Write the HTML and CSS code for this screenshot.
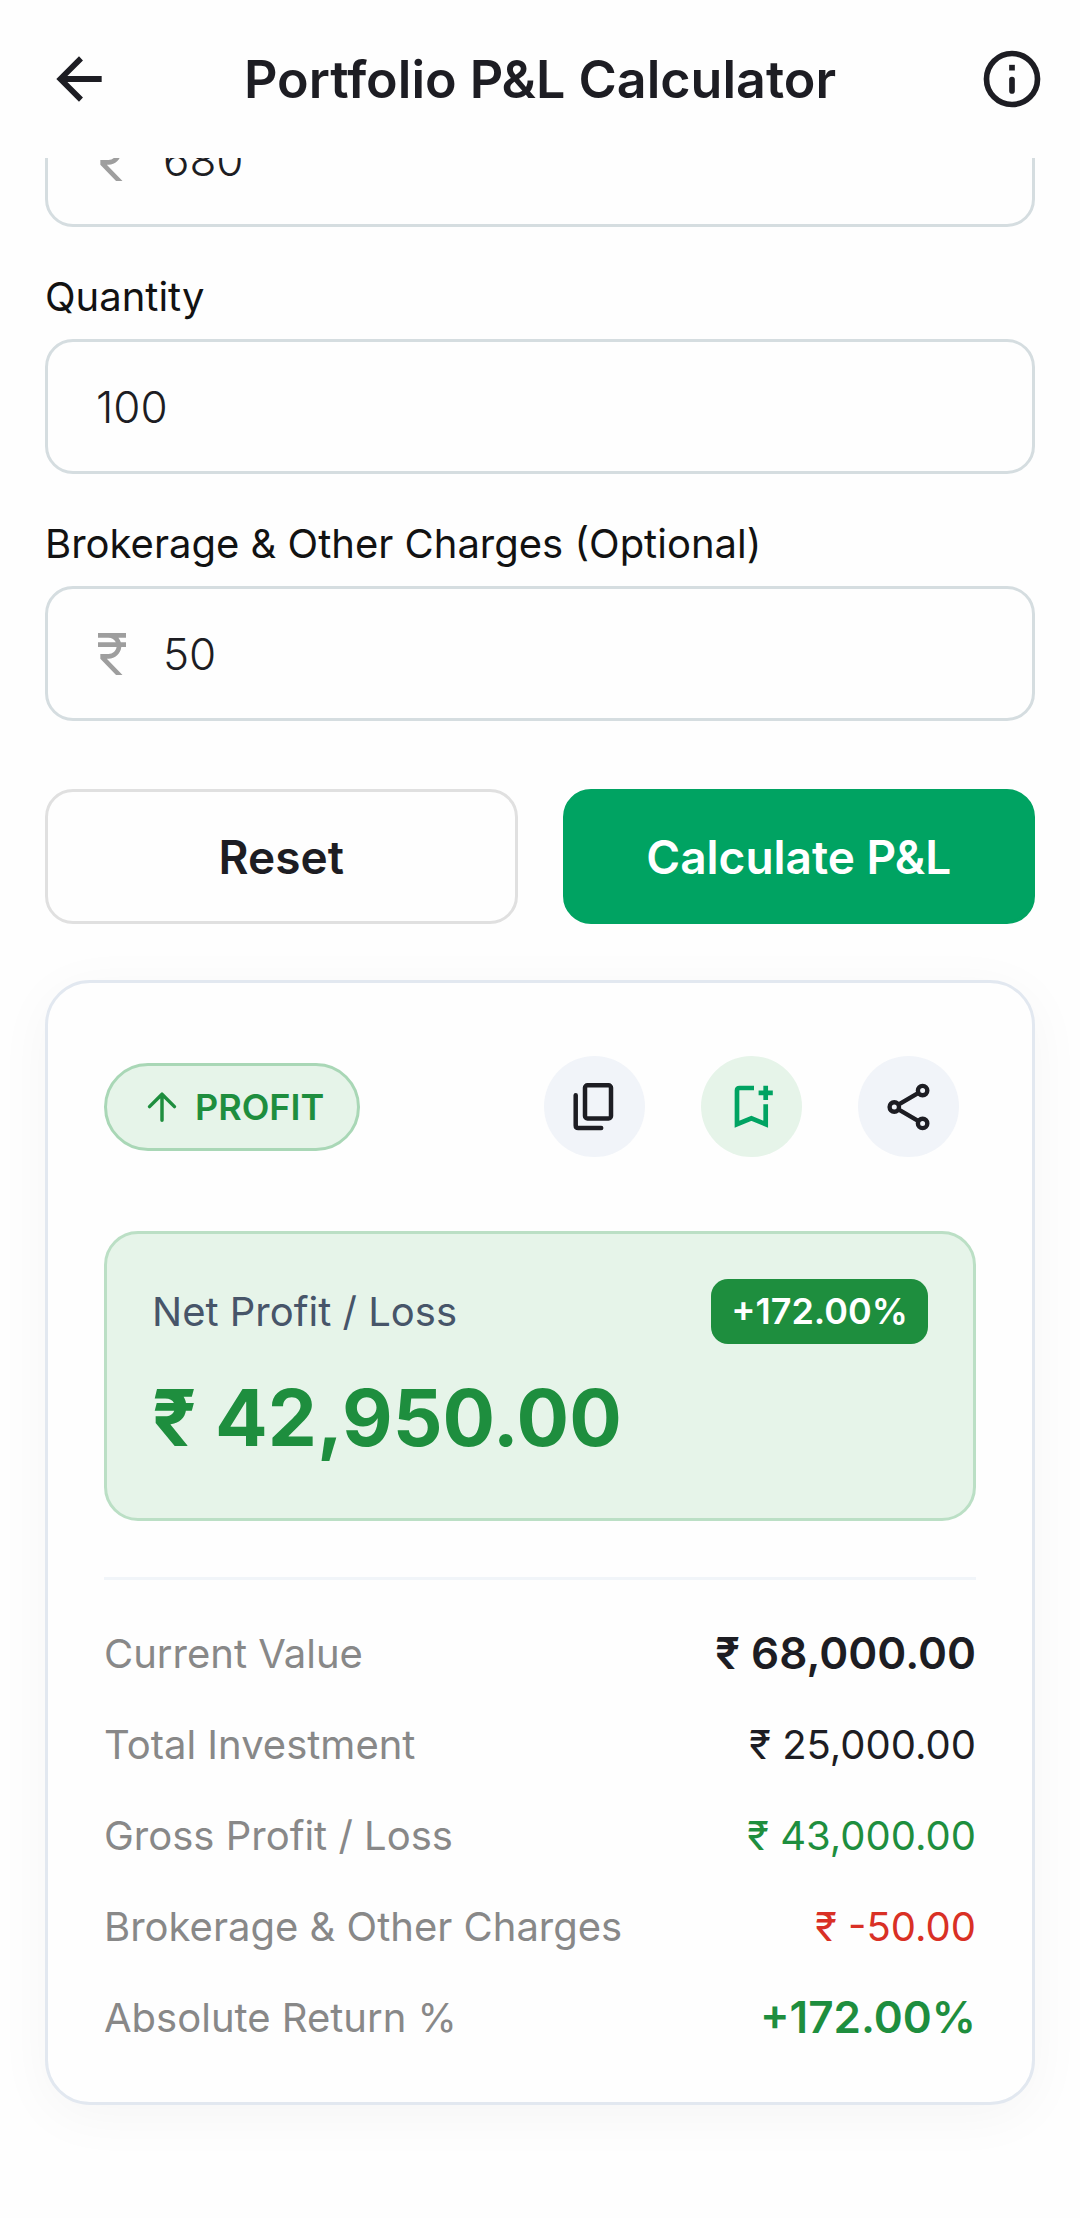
FILE: index.html
```html
<!DOCTYPE html>
<html lang="en">
<head>
<meta charset="utf-8">
<meta name="viewport" content="width=device-width, initial-scale=1">
<title>Portfolio P&amp;L Calculator</title>
<link rel="stylesheet" href="styles.css">
</head>
<body>
<header class="app-bar">
  <button class="bar-button" type="button" aria-label="Back">
    <svg class="bar-icon" viewBox="0 0 24 24" fill="currentColor"><path d="M7.9 13.1l5.5 5.4L12 20l-8-8 8-8 1.4 1.5-5.5 5.4H20v2.2z"/></svg>
  </button>
  <h1 class="title">Portfolio P&amp;L Calculator</h1>
  <button class="bar-button bar-button-end" type="button" aria-label="Information">
    <svg class="bar-icon" viewBox="0 0 24 24" fill="none" stroke="currentColor" stroke-width="2"><circle cx="12" cy="12" r="9"/><path d="M12 12.2v4" stroke-linecap="round"/><path d="M12 7v2"/></svg>
  </button>
</header>

<main class="page">
  <form class="form">
    <div class="field field-scrolled">
      <div class="control">
        <svg class="rupee" viewBox="6 3 12 18" fill="currentColor"><path d="M13.66 7C13.1 5.82 11.9 5 10.5 5H6V3h12v2h-3.26c.48.58.84 1.26 1.05 2H18v2h-2.02c-.25 2.8-2.61 5-5.48 5h-.73l6.73 7h-2.77L7 14v-2h3.5c1.76 0 3.22-1.3 3.46-3H6V7z"/></svg>
        <input class="input" type="text" inputmode="decimal" aria-label="Price" value="680">
      </div>
    </div>
    <div class="field">
      <label class="label" for="quantity">Quantity</label>
      <div class="control">
        <input class="input" id="quantity" type="text" inputmode="numeric" value="100">
      </div>
    </div>
    <div class="field">
      <label class="label" for="charges">Brokerage &amp; Other Charges (Optional)</label>
      <div class="control">
        <svg class="rupee" viewBox="6 3 12 18" fill="currentColor"><path d="M13.66 7C13.1 5.82 11.9 5 10.5 5H6V3h12v2h-3.26c.48.58.84 1.26 1.05 2H18v2h-2.02c-.25 2.8-2.61 5-5.48 5h-.73l6.73 7h-2.77L7 14v-2h3.5c1.76 0 3.22-1.3 3.46-3H6V7z"/></svg>
        <input class="input" id="charges" type="text" inputmode="decimal" value="50">
      </div>
    </div>
    <div class="actions">
      <button class="button" type="reset">Reset</button>
      <button class="button button-primary" type="button">Calculate P&amp;L</button>
    </div>
  </form>

  <section class="card">
    <div class="card-head">
      <span class="status">
        <svg class="status-icon" viewBox="0 0 24 24" fill="none" stroke="currentColor" stroke-width="1.9" stroke-linecap="round" stroke-linejoin="round"><path d="M12 19.2V5.2M5.2 11.8L12 5l6.8 6.8"/></svg>
        PROFIT
      </span>
      <div class="tools">
        <button class="tool" type="button" aria-label="Copy">
          <svg class="tool-icon" viewBox="0 0 101 101" fill="none" stroke="currentColor" stroke-width="4.5" stroke-linecap="round"><rect x="41" y="29.3" width="26" height="33.2" rx="2.5"/><path d="M31.7 39.3v30.2q0 2.5 2.5 2.5H57.2"/></svg>
        </button>
        <button class="tool tool-save" type="button" aria-label="Save">
          <svg class="tool-icon" viewBox="0 0 101 101" fill="none" stroke="currentColor" stroke-width="4.7"><path d="M53 32H38.6q-2.6 0-2.6 2.6V68.2l14.4-5.8 14.3 5.8V48.3M64.7 29.7v14.2M57.6 36.8h14.2"/></svg>
        </button>
        <button class="tool" type="button" aria-label="Share">
          <svg class="tool-icon" viewBox="0 0 101 101" fill="none" stroke="currentColor" stroke-width="4.4"><circle cx="64.6" cy="34.6" r="4.7"/><circle cx="36.3" cy="51" r="4.7"/><circle cx="64.6" cy="67.4" r="4.7"/><path d="M40.4 48.6l20.1-11.7M40.4 53.4l20.1 11.7"/></svg>
        </button>
      </div>
    </div>

    <div class="net">
      <div class="net-head">
        <span class="net-label">Net Profit / Loss</span>
        <span class="badge">+172.00%</span>
      </div>
      <strong class="net-value">₹ 42,950.00</strong>
    </div>

    <dl class="details">
      <div class="row"><dt>Current Value</dt><dd class="strong">₹ 68,000.00</dd></div>
      <div class="row"><dt>Total Investment</dt><dd>₹ 25,000.00</dd></div>
      <div class="row"><dt>Gross Profit / Loss</dt><dd class="gain">₹ 43,000.00</dd></div>
      <div class="row"><dt>Brokerage &amp; Other Charges</dt><dd class="loss">₹ -50.00</dd></div>
      <div class="row"><dt>Absolute Return %</dt><dd class="strong gain">+172.00%</dd></div>
    </dl>
  </section>
</main>
</body>
</html>
```

FILE: styles.css
```css
* {
  box-sizing: border-box;
}

body {
  margin: 0;
  background: #fefefe;
  color: #1d1d23;
  font-family: Inter, "Liberation Sans", sans-serif;
  font-size: 40px;
}

button,
input {
  margin: 0;
  padding: 0;
  border: 0;
  background: none;
  color: inherit;
  font: inherit;
}

svg {
  display: block;
}

.app-bar {
  position: sticky;
  top: 0;
  z-index: 1;
  display: grid;
  grid-template-columns: 1fr auto 1fr;
  align-items: center;
  height: 158px;
  padding: 0 34px;
  background: #fefefe;
}

.bar-button {
  justify-self: start;
  margin-left: 11px;
}

.bar-button-end {
  justify-self: end;
  margin-left: 0;
}

.bar-icon {
  width: 68px;
  height: 68px;
}

.title {
  margin: 0;
  font-size: 52px;
  font-weight: 600;
}

.page {
  padding: 0 45px 113px;
}

.form {
  display: flex;
  flex-direction: column;
  gap: 44px;
}

.field {
  display: flex;
  flex-direction: column;
  gap: 17px;
}

/* The first field is scrolled partly under the app bar. */
.field-scrolled {
  margin-top: -66px;
}

.label {
  color: #121212;
  line-height: 51px;
  font-weight: 400;
}

.control {
  display: flex;
  align-items: center;
  gap: 35px;
  height: 135px;
  padding: 0 48px;
  border: 3px solid #d5dde0;
  border-radius: 28px;
}

.rupee {
  flex: none;
  width: 32px;
  height: 42px;
  color: #9e9e9e;
}

.input {
  flex: 1;
  min-width: 0;
  font-size: 44px;
  font-weight: 300;
  outline: none;
}

.actions {
  display: grid;
  grid-template-columns: 1fr 1fr;
  gap: 45px;
  padding-top: 24px;
}

.button {
  height: 135px;
  border: 3px solid #e0e0e0;
  border-radius: 28px;
  font-size: 46px;
  font-weight: 600;
}

.button-primary {
  border-color: #00a362;
  background: #00a362;
  color: #fff;
}

.card {
  margin-top: 56px;
  padding: 56px;
  border: 3px solid #e2e8f0;
  border-radius: 45px;
  background: #fefefe;
  box-shadow: 0 11px 56px rgba(0, 0, 0, 0.04);
}

.card-head {
  display: flex;
  align-items: center;
  justify-content: space-between;
}

.status {
  display: flex;
  align-items: center;
  gap: 11px;
  height: 88px;
  padding: 0 33px;
  border: 3px solid #a9d7b6;
  border-radius: 44px;
  background: #e6f4e9;
  color: #1e8e3e;
  font-size: 36px;
  font-weight: 600;
}

.status-icon {
  width: 44px;
  height: 44px;
}

.tools {
  display: flex;
  gap: 22px;
}

.tool {
  padding: 17px;
}

.tool-icon {
  width: 101px;
  height: 101px;
  border-radius: 50%;
  background: #f1f4f9;
}

.tool-save .tool-icon {
  background: #e6f4e9;
  color: #00a362;
}

.net {
  margin-top: 57px;
  padding: 45px 45px 47px;
  border: 3px solid #bbdfc5;
  border-radius: 34px;
  background: #e6f4e9;
}

.net-head {
  display: flex;
  align-items: center;
  justify-content: space-between;
}

.net-label {
  color: #475569;
}

.badge {
  padding: 0 20px;
  border-radius: 17px;
  background: #1e8e3e;
  color: #fff;
  font-size: 36px;
  font-weight: 600;
  line-height: 65px;
}

.net-value {
  display: block;
  margin-top: 21px;
  color: #1e8e3e;
  font-size: 78px;
  font-weight: 700;
  line-height: 106px;
}

.details {
  display: flex;
  flex-direction: column;
  gap: 34px;
  margin: 56px 0 0;
  padding-top: 45px;
  border-top: 3px solid #f1f5f9;
}

.row {
  display: flex;
  justify-content: space-between;
  line-height: 57px;
}

.row dt {
  color: #888;
}

.row dd {
  margin: 0;
}

.row .strong {
  font-size: 44px;
  font-weight: 600;
}

.row .gain {
  color: #1e8e3e;
}

.row .loss {
  color: #d93025;
}
```
